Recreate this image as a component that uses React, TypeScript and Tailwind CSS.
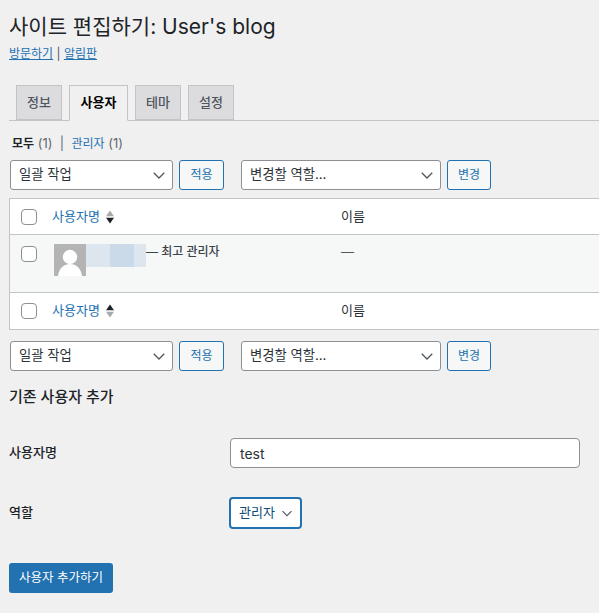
function Chevron({ small }: { small?: boolean }) {
  return (
    <svg viewBox="0 0 16 16" className={small ? "w-3 h-3 shrink-0" : "w-[14px] h-[14px] shrink-0"} fill="none" stroke="#50575e" strokeWidth="1.5">
      <path d="M2 5.5 8 11.5l6-6" />
    </svg>
  );
}
function Select({ label, w }: { label: string; w: string }) {
  return (
    <div className={"flex items-center justify-between h-[30px] bg-white border border-[#8c8f94] rounded-[3px] pl-[8px] pr-[6px] text-[13.3px] text-[#2c3338] " + w}>
      <span>{label}</span>
      <Chevron />
    </div>
  );
}
function Btn({ label, w }: { label: string; w: string }) {
  return (
    <div className={"flex items-center justify-center h-[30px] bg-[#f6f7f7] border border-[#2271b1] rounded-[3px] text-[12px] text-[#2271b1] " + w}>
      {label}
    </div>
  );
}
function Actions() {
  return (
    <div className="flex items-center pl-[10px]">
      <Select label="일괄 작업" w="w-[163px]" />
      <Btn label="적용" w="w-[45px] ml-[6px]" />
      <Select label="변경할 역할..." w="w-[200px] ml-[17px]" />
      <Btn label="변경" w="w-[44px] ml-[6px]" />
    </div>
  );
}
function Check() {
  return <div className="w-4 h-4 bg-white border border-[#8c8f94] rounded-[4px] shrink-0" />;
}
function Sort({ up }: { up?: boolean }) {
  return (
    <svg viewBox="0 0 8 14" className="w-[8px] h-[14px] ml-[6px] shrink-0">
      <path d="M4 0.5 8 6.3H0z" fill={up ? "#1d2327" : "#a7aaad"} />
      <path d="M4 13.5 0 7.7h8z" fill={up ? "#a7aaad" : "#1d2327"} />
    </svg>
  );
}
function HeadRow({ up, border }: { up?: boolean; border: string }) {
  return (
    <div className={"flex items-center bg-white h-[36px] " + border}>
      <div className="w-[42px] pl-[11px] flex"><Check /></div>
      <div className="w-[289px] flex items-center text-[13px] text-[#2271b1]">
        사용자명
        <Sort up={up} />
      </div>
      <div className="text-[13px] text-[#2c3338]">이름</div>
    </div>
  );
}
function Tab({ label, active, w }: { label: string; active?: boolean; w: string }) {
  return (
    <div
      className={
        "flex items-center justify-center border border-[#c3c4c7] text-[13px] " +
        w +
        (active
          ? " h-[36px] -mb-px bg-[#f0f0f1] border-b-[#f0f0f1] text-black font-semibold"
          : " h-[35px] bg-[#dcdcde] text-[#50575e] font-medium")
      }
    >
      {label}
    </div>
  );
}
export default function App() {
  return (
    <div className="w-[599px] h-[613px] overflow-hidden bg-[#f0f0f1] text-[#1d2327] text-[13px]">
      <div className="w-[640px] h-full font-['Inter','Noto_Sans_CJK_KR',sans-serif]">
        <h1 className="pl-[9px] pt-[12px] text-[21px] leading-[29px] font-normal">사이트 편집하기: User's blog</h1>
        <div className="pl-[9px] mt-[4px] leading-[18px] text-[#50575e] text-[12px]">
          <span className="text-[#2271b1] underline">방문하기</span> | <span className="text-[#2271b1] underline">알림판</span>
        </div>
        <div className="ml-[9px] mt-[22px] flex items-end gap-[7px] pl-[7px] border-b border-[#c3c4c7] h-[36px] w-[631px]">
          <Tab label="정보" w="w-[46px]" />
          <Tab label="사용자" active w="w-[59px]" />
          <Tab label="테마" w="w-[46px]" />
          <Tab label="설정" w="w-[46px]" />
        </div>
        <div className="pl-[12px] mt-[13px] h-[18px] leading-[18px] text-[13px] text-[#646970] whitespace-pre">
          <span className="text-[12px] font-semibold text-[#1d2327]">모두</span> (1)  |  <span className="text-[12px] text-[#2271b1]">관리자</span> (1)
        </div>
        <div className="mt-[8px]"><Actions /></div>
        <div className="ml-[9px] mt-[8px] border border-[#c3c4c7] w-[631px]">
          <HeadRow border="border-b border-[#c3c4c7]" />
          <div className="flex h-[58px] bg-[#f6f7f7] border-b border-[#c3c4c7]">
            <div className="w-[42px] pl-[11px] pt-[11px]"><Check /></div>
            <div className="w-[289px] pt-[9px] flex items-start">
              <div className="ml-[2px] w-[32px] h-[32px] bg-[#b4b4b4] overflow-hidden shrink-0">
                <svg viewBox="0 0 32 32" className="w-full h-full">
                  <circle cx="16" cy="13" r="7.2" fill="#fff" />
                  <path d="M4 32c1-8 6-12 12-12s11 4 12 12z" fill="#fff" />
                </svg>
              </div>
              <div className="flex h-[23px] shrink-0">
                <div className="w-[24px] bg-[#dde5ee]" />
                <div className="w-[24px] bg-[#cbdae9]" />
                <div className="w-[12px] bg-[#dde5ee]" />
              </div>
              <div className="text-[12px] font-medium text-[#3c434a] leading-[14px] pt-[1px] whitespace-nowrap">— 최고 관리자</div>
            </div>
            <div className="pt-[8px] text-[13px] leading-[18px] text-[#50575e]">—</div>
          </div>
          <HeadRow up border="" />
        </div>
        <div className="mt-[11px]"><Actions /></div>
        <h2 className="pl-[9px] mt-[15px] text-[15px] leading-[22px] font-medium text-[#1d2327]">기존 사용자 추가</h2>
        <div className="mt-[30px] flex items-center pl-[9px] h-[30px]">
          <div className="w-[221px] text-[13px] font-medium text-[#1d2327]">사용자명</div>
          <div className="w-[350px] h-[30px] flex items-center bg-white border border-[#8c8f94] rounded-[4px] pl-[9px] text-[14px] text-[#2c3338]">test</div>
        </div>
        <div className="mt-[29px] flex items-center pl-[9px] h-[32px]">
          <div className="w-[220px] text-[13px] font-medium text-[#1d2327]">역할</div>
          <div className="w-[73px] h-[32px] flex items-center gap-[6px] bg-white border-2 border-[#2271b1] rounded-[4px] pl-[8px] text-[13px] text-[#0a4b78]">
            관리자
            <Chevron small />
          </div>
        </div>
        <div className="ml-[9px] mt-[34px] w-[104px] h-[30px] flex items-center justify-center bg-[#2271b1] rounded-[3px] text-[12.5px] text-white">사용자 추가하기</div>
      </div>
    </div>
  );
}
